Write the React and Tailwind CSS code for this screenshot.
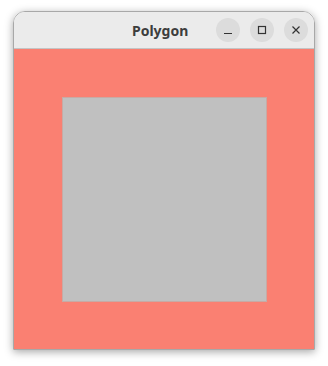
import React from 'react';

const WindowButton = ({ children }) => (
  <div className="w-[24px] h-[24px] rounded-full bg-[#dcdcdc] flex items-center justify-center text-[#333]">
    {children}
  </div>
);

const App = () => {
  return (
    <div className="w-[328px] h-[366px] bg-white pt-[11px] pl-[13px]">
      <div className="w-[302px] border border-[#a8a8a8] rounded-t-[12px] shadow-[0_2px_8px_rgba(0,0,0,0.35)] overflow-hidden">
        {/* Title bar */}
        <div className="h-[37px] bg-[#ebebeb] border-b border-[#c4c4c4] flex items-center relative">
          <span
            className="absolute left-[118px] top-[8px] text-[14px] font-bold text-[#3d3d3d]"
            style={{ fontFamily: '"Noto Sans", "DejaVu Sans", sans-serif' }}
          >
            Polygon
          </span>
          <div className="ml-auto mr-[6px] flex gap-[10px]">
            <WindowButton>
              <svg width="10" height="10" viewBox="0 0 10 10">
                <path d="M1 8.5h8" stroke="#333" strokeWidth="1.2" />
              </svg>
            </WindowButton>
            <WindowButton>
              <svg width="10" height="10" viewBox="0 0 10 10">
                <rect x="1.5" y="1.5" width="7" height="7" fill="none" stroke="#333" strokeWidth="1.2" />
              </svg>
            </WindowButton>
            <WindowButton>
              <svg width="10" height="10" viewBox="0 0 10 10">
                <path d="M1.5 1.5l7 7M8.5 1.5l-7 7" stroke="#333" strokeWidth="1.2" />
              </svg>
            </WindowButton>
          </div>
        </div>
        {/* Canvas */}
        <div className="h-[300px] bg-[#fa8072] pt-[48px] pl-[48px]">
          <div className="w-[205px] h-[205px] bg-[#c0c0c0] border border-[#c8aaa4]" />
        </div>
      </div>
    </div>
  );
};

export default App;
